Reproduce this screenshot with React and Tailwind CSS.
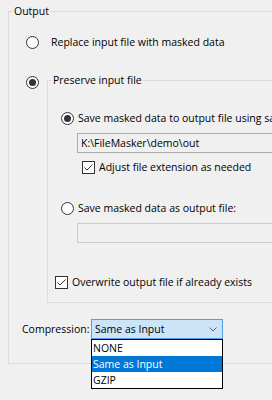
import { useState } from "react";

const Radio = ({ checked }) => (
  <span className="w-[13px] h-[13px] shrink-0 rounded-full border border-[#333333] bg-white flex items-center justify-center">
    {checked && <span className="w-[7px] h-[7px] rounded-full bg-[#333333]"></span>}
  </span>
);

const Check = ({ checked }) => (
  <span className="w-[13px] h-[13px] shrink-0 border border-[#333333] bg-white flex items-center justify-center">
    {checked && (
      <svg width="11" height="11" viewBox="0 0 11 11">
        <path d="M1.5 5.5 L4 8 L9.5 2.5" fill="none" stroke="#333333" strokeWidth="1" />
      </svg>
    )}
  </span>
);

const App = () => {
  const [compression] = useState("Same as Input");
  const options = ["NONE", "Same as Input", "GZIP"];

  return (
    <div className="w-[272px] h-[400px] overflow-hidden bg-[#f0f0f0] text-black text-[10.5px] leading-[16px] font-['Open_Sans','Noto_Sans',sans-serif]">
      <fieldset className="ml-[8px] mt-[3px] w-[300px] h-[361px] border border-[#dcdcdc]">
        <legend className="ml-[4px] px-[1px]">Output</legend>

        {/* Replace */}
        <div className="flex items-center h-[16px] mt-[15px] ml-[17px]">
          <Radio />
          <span className="ml-[12px]">Replace input file with masked data</span>
        </div>

        {/* Preserve */}
        <div className="flex mt-[22px]">
          <div className="ml-[17px] mt-[4px]">
            <Radio checked />
          </div>
          <fieldset className="ml-[8px] w-[260px] border border-[#dcdcdc] pb-[12px]">
            <legend className="ml-[4px] px-[1px]">Preserve input file</legend>

            <div className="flex items-center h-[16px] mt-[22px] ml-[13px] whitespace-nowrap">
              <Radio checked />
              <span className="ml-[4px]">Save masked data to output file using same name</span>
            </div>
            <div className="mt-[7px] ml-[29px] h-[20px] border border-[#acacac] bg-[#f0f0f0] pl-[3px] leading-[18px]">
              K:\FileMasker\demo\out
            </div>
            <div className="flex items-center h-[16px] mt-[6px] ml-[34px]">
              <Check checked />
              <span className="ml-[4px]">Adjust file extension as needed</span>
            </div>

            <div className="flex items-center h-[16px] mt-[25px] ml-[13px]">
              <Radio />
              <span className="ml-[4px]">Save masked data as output file:</span>
            </div>
            <div className="mt-[7px] ml-[29px] h-[20px] border border-[#cccccc] bg-[#f0f0f0]"></div>

            <div className="flex items-center h-[16px] mt-[31px] ml-[7px]">
              <Check checked />
              <span className="ml-[4px]">Overwrite output file if already exists</span>
            </div>
          </fieldset>
        </div>

        {/* Compression */}
        <div className="flex items-center mt-[16px] ml-[13px]">
          <span className="w-[69px]">Compression:</span>
          <div className="relative w-[132px]">
            <div className="h-[20px] border border-[#569de5] bg-[#cce4f7] pl-[3px] flex items-center justify-between pr-[5px]">
              <span>{compression}</span>
              <svg width="8" height="5" viewBox="0 0 8 5">
                <path d="M0.5 0.5 L4 4 L7.5 0.5" fill="none" stroke="#606060" strokeWidth="1" />
              </svg>
            </div>
            <ul className="absolute top-full left-0 w-full border border-black bg-white">
              {options.map((opt) => (
                <li
                  key={opt}
                  className={`h-[16px] pl-[1px] ${opt === compression ? "bg-[#0078d7] text-white" : ""}`}
                >
                  {opt}
                </li>
              ))}
            </ul>
          </div>
        </div>
      </fieldset>
    </div>
  );
};

export default App;
